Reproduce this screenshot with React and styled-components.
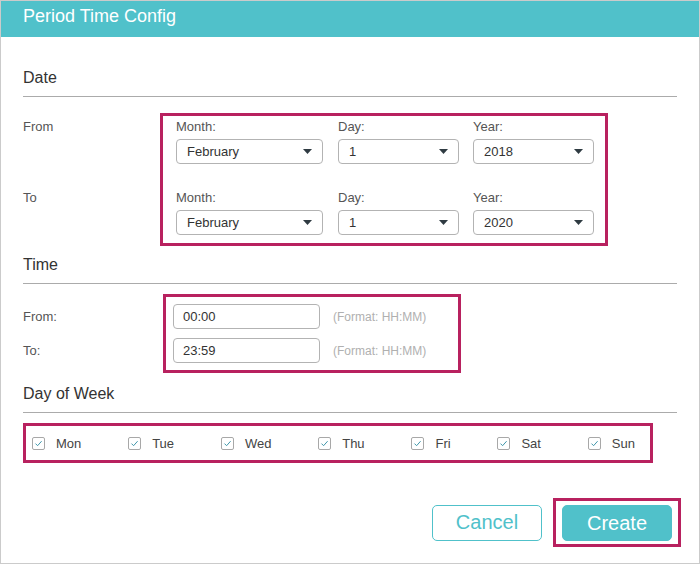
import React from 'react'
import styled, { createGlobalStyle } from 'styled-components'

const TEAL = '#50c1ca'
const MARK = '#b8215f'

const GlobalStyle = createGlobalStyle`
  * { box-sizing: border-box; }
  body {
    margin: 0;
    background: #fff;
    font-family: "Liberation Sans", Arial, sans-serif;
  }
`

const Window = styled.div`
  width: 700px;
  height: 564px;
  border: 1px solid #cbcbcb;
  background: #fff;
  display: flex;
  flex-direction: column;
`

const Header = styled.div`
  height: 36px;
  line-height: 31px;
  padding-left: 22px;
  background: ${TEAL};
  color: #fff;
  font-size: 18px;
`

const Body = styled.div`
  padding: 0 22px;
  display: flex;
  flex-direction: column;
`

const SectionHead = styled.div`
  margin-top: ${p => p.$top}px;
  padding-bottom: 8px;
  border-bottom: 1px solid #ababab;
  font-size: 16px;
  line-height: 20px;
  color: #333;
`

const Row = styled.div`
  display: flex;
  align-items: flex-start;
  margin-top: ${p => p.$top}px;
`

const SideLabels = styled.div`
  width: ${p => p.$width}px;
  padding-top: ${p => p.$pad}px;
  display: flex;
  flex-direction: column;
  gap: ${p => p.$gap}px;
`

const SideLabel = styled.div`
  font-size: 13px;
  line-height: ${p => p.$h || 16}px;
  color: #555;
`

const Frame = styled.div`
  border: 3px solid ${MARK};
  padding: ${p => p.$pad};
  width: ${p => (p.$width ? `${p.$width}px` : 'auto')};
`

const DateGrid = styled.div`
  display: grid;
  grid-template-columns: 148px 121px 121px;
  column-gap: 14px;
  row-gap: 26px;
`

const Field = styled.div`
  display: flex;
  flex-direction: column;
  gap: 4px;
`

const FieldLabel = styled.div`
  font-size: 13px;
  line-height: 16px;
  color: #555;
`

const SelectBox = styled.div`
  width: ${p => p.$width}px;
  height: 25px;
  border: 1px solid #b3b3b3;
  border-radius: 4px;
  padding: 0 10px 0 10px;
  display: flex;
  align-items: center;
  justify-content: space-between;
  font-size: 13px;
  color: #333;
`

const TimeRows = styled.div`
  display: flex;
  flex-direction: column;
  gap: 9px;
`

const TimeRow = styled.div`
  display: flex;
  align-items: center;
  gap: 13px;
`

const TimeInput = styled.input`
  width: 147px;
  height: 25px;
  margin: 0;
  border: 1px solid #b3b3b3;
  border-radius: 4px;
  padding: 0 9px;
  font-family: "Liberation Sans", Arial, sans-serif;
  font-size: 13px;
  color: #333;
  outline: none;
`

const Hint = styled.span`
  font-size: 12px;
  color: #b0b0b0;
`

const DayFrame = styled(Frame)`
  height: 40px;
  display: flex;
  align-items: center;
  justify-content: space-between;
  padding: 0 15px 0 6px;
`

const Day = styled.label`
  display: flex;
  align-items: center;
  gap: 11px;
  font-size: 13px;
  color: #444;
`

const Box = styled.span`
  width: 13px;
  height: 13px;
  border: 1px solid #a8a8a8;
  border-radius: 2px;
  display: flex;
  align-items: center;
  justify-content: center;
`

const Footer = styled.div`
  margin-top: 35px;
  margin-right: -4px;
  display: flex;
  justify-content: flex-end;
  align-items: center;
  gap: 11px;
`

const Button = styled.button`
  width: 110px;
  height: 36px;
  margin: 0;
  padding: 0;
  border-radius: 5px;
  border: 1px solid ${TEAL};
  background: ${p => (p.$primary ? TEAL : '#fff')};
  color: ${p => (p.$primary ? '#fff' : TEAL)};
  font-family: "Liberation Sans", Arial, sans-serif;
  font-size: 20px;
  cursor: pointer;
`

const Caret = () => (
  <svg width="9" height="5" viewBox="0 0 9 5">
    <path d="M0 0 L9 0 L4.5 5 Z" fill="#2f3b42" />
  </svg>
)

const Check = () => (
  <svg width="11" height="11" viewBox="0 0 11 11">
    <path d="M2.5 5.6 L4.6 7.7 L8.6 3.2" fill="none" stroke="#3f97ab" strokeWidth="1" />
  </svg>
)

const Select = ({ value, width }) => (
  <SelectBox $width={width}>
    <span>{value}</span>
    <Caret />
  </SelectBox>
)

const dateRows = [
  { month: 'February', day: '1', year: '2018' },
  { month: 'February', day: '1', year: '2020' },
]

const days = ['Mon', 'Tue', 'Wed', 'Thu', 'Fri', 'Sat', 'Sun']

export default function App() {
  return (
    <>
      <GlobalStyle />
      <Window>
        <Header>Period Time Config</Header>
        <Body>
          <SectionHead $top={31}>Date</SectionHead>
          <Row $top={16}>
            <SideLabels $width={137} $pad={6} $gap={55}>
              <SideLabel>From</SideLabel>
              <SideLabel>To</SideLabel>
            </SideLabels>
            <Frame $pad="3px 11px 8px 13px">
              <DateGrid>
                {dateRows.map((r, i) => (
                  <React.Fragment key={i}>
                    <Field>
                      <FieldLabel>Month:</FieldLabel>
                      <Select value={r.month} width={147} />
                    </Field>
                    <Field>
                      <FieldLabel>Day:</FieldLabel>
                      <Select value={r.day} width={121} />
                    </Field>
                    <Field>
                      <FieldLabel>Year:</FieldLabel>
                      <Select value={r.year} width={121} />
                    </Field>
                  </React.Fragment>
                ))}
              </DateGrid>
            </Frame>
          </Row>

          <SectionHead $top={9}>Time</SectionHead>
          <Row $top={10}>
            <SideLabels $width={140} $pad={10} $gap={9}>
              <SideLabel $h={25}>From:</SideLabel>
              <SideLabel $h={25}>To:</SideLabel>
            </SideLabels>
            <Frame $pad="7px 7px 7px 7px" $width={298}>
              <TimeRows>
                <TimeRow>
                  <TimeInput readOnly defaultValue="00:00" />
                  <Hint>(Format: HH:MM)</Hint>
                </TimeRow>
                <TimeRow>
                  <TimeInput readOnly defaultValue="23:59" />
                  <Hint>(Format: HH:MM)</Hint>
                </TimeRow>
              </TimeRows>
            </Frame>
          </Row>

          <SectionHead $top={11}>Day of Week</SectionHead>
          <Row $top={10}>
            <DayFrame $width={630}>
              {days.map(d => (
                <Day key={d}>
                  <Box><Check /></Box>
                  {d}
                </Day>
              ))}
            </DayFrame>
          </Row>

          <Footer>
            <Button>Cancel</Button>
            <Frame $pad="4px 6px 3px 6px">
              <Button $primary>Create</Button>
            </Frame>
          </Footer>
        </Body>
      </Window>
    </>
  )
}
